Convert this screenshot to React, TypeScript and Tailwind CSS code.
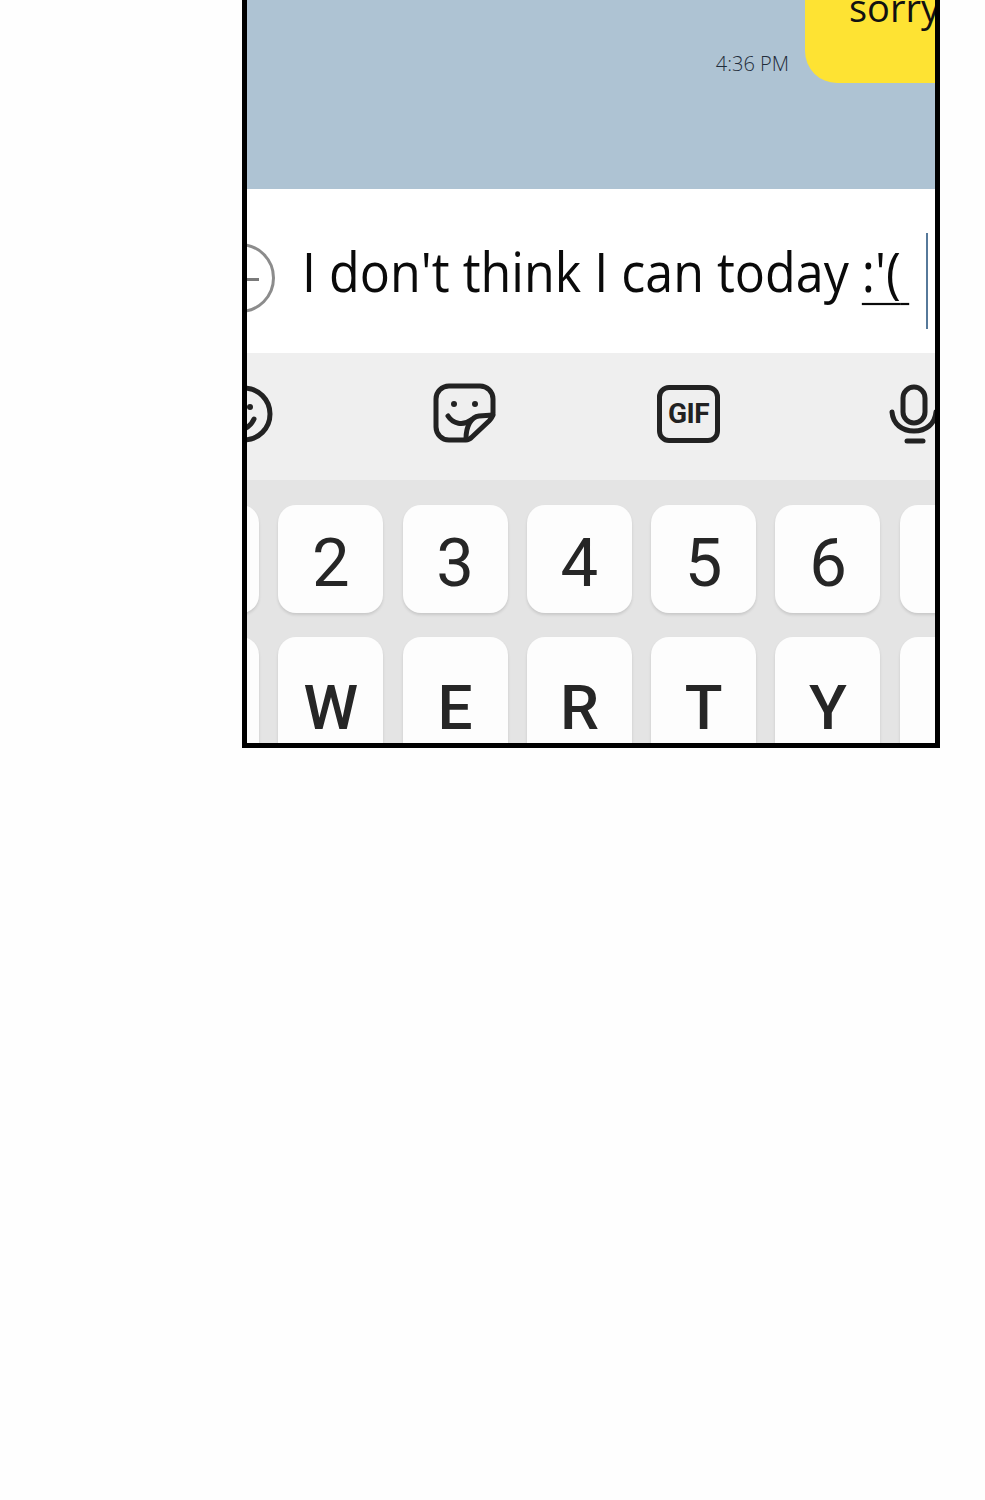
import React from 'react';

const digits = ['1', '2', '3', '4', '5', '6', '7'];
const letters = ['Q', 'W', 'E', 'R', 'T', 'Y', 'U'];

const Key: React.FC<{ label: string; tall?: boolean }> = ({ label, tall }) => (
  <div
    className={`w-[105px] shrink-0 bg-[#fdfdfd] rounded-[18px] shadow-[0_2px_3px_rgba(0,0,0,0.12)] flex items-center justify-center text-[#262626] font-['Roboto',sans-serif] leading-none ${
      tall ? 'h-[142px] font-medium text-[62px]' : 'h-[108px] font-normal text-[67px] pt-[8px]'
    }`}
  >
    {label}
  </div>
);

const EmojiIcon = () => (
  <svg width="64" height="64" viewBox="0 0 64 64" fill="none" stroke="#222" strokeWidth="5" strokeLinecap="round" className="shrink-0">
    <circle cx="32" cy="32" r="26" />
    <circle cx="22" cy="25" r="3" fill="#222" stroke="none" />
    <circle cx="38" cy="25" r="3" fill="#222" stroke="none" />
    <path d="M18 37 C 22 50 36 50 42 37" />
  </svg>
);

const StickerIcon = () => (
  <svg width="64" height="64" viewBox="0 0 64 64" fill="none" stroke="#222" strokeWidth="5" strokeLinecap="round" strokeLinejoin="round" className="shrink-0">
    <path d="M33 58 H16 A13 13 0 0 1 3 45 V17 A13 13 0 0 1 16 4 H47 A13 13 0 0 1 60 17 V31 C 60 35 58 37 56 39 L39 55 C 37 57 35 58 33 58 Z" />
    <path d="M60 33 L46 34 C 38 35 33 44 33 57" />
    <path d="M15 34 C 20 42 30 44 38 38" />
    <circle cx="21" cy="22" r="3" fill="#222" stroke="none" />
    <circle cx="42" cy="22" r="3" fill="#222" stroke="none" />
  </svg>
);

const MicIcon = () => (
  <svg width="64" height="64" viewBox="0 0 64 64" fill="none" stroke="#222" strokeWidth="5" strokeLinecap="round" className="shrink-0">
    <rect x="21" y="5" width="22" height="36" rx="11" />
    <path d="M10 30 C 11 42 20 49 32 49 C 44 49 53 42 54 30" />
    <path d="M25 59 H41" />
  </svg>
);

const App: React.FC = () => {
  return (
    <div className="w-[985px] h-[1500px] bg-[#fefefe] overflow-hidden">
      <div className="ml-[242px] w-[698px] h-[748px] border-x-[5px] border-b-[5px] border-black flex flex-col overflow-hidden font-['Open_Sans',sans-serif]">
        {/* Chat */}
        <div className="h-[189px] shrink-0 bg-[#aec3d3] flex justify-end items-start overflow-hidden">
          <span className="mt-[52px] mr-[16px] text-[20px] leading-[24px] font-light text-[#1f2c3a]">4:36 PM</span>
          <div className="w-[130px] h-[83px] shrink-0 bg-[#fee333] rounded-bl-[32px] overflow-hidden">
            <div className="-mt-[17px] ml-[44px] text-[38px] leading-[48px] text-[#111] whitespace-nowrap">sorry</div>
          </div>
        </div>

        {/* Input */}
        <div className="h-[164px] shrink-0 bg-white flex items-center overflow-hidden">
          <div className="relative -ml-[42px] mr-[27px] w-[70px] h-[70px] shrink-0 rounded-full border-[3px] border-[#8c8c8c] mt-[14px]">
            <div className="absolute left-[15px] top-[32px] w-[36px] h-[3px] bg-[#7a7a7a]"></div>
          </div>
          <div className="text-[50.2px] leading-[64px] text-[#0a0a0a] whitespace-nowrap scale-y-110">
            I don't think I can today <span className="underline decoration-[2px] underline-offset-[10px]">:'({'\u2009'}</span>
          </div>
          <div className="ml-auto mr-[7px] w-[2px] h-[96px] bg-[#56799a] mt-[20px]"></div>
        </div>

        {/* Toolbar */}
        <div className="h-[127px] shrink-0 bg-[#efefef] flex items-center -ml-[35px] pb-[6px]">
          <EmojiIcon />
          <div className="ml-[157px]">
            <StickerIcon />
          </div>
          <div className="ml-[160px] w-[63px] h-[58px] shrink-0 rounded-[12px] border-[5px] border-[#222] flex items-center justify-center font-['Roboto',sans-serif] font-bold text-[28px] text-[#222] tracking-[-0.5px]">
            GIF
          </div>
          <div className="ml-[162px]">
            <MicIcon />
          </div>
        </div>

        {/* Keyboard */}
        <div className="flex-1 bg-[#e4e4e4] overflow-hidden pt-[25px] flex flex-col gap-[24px]">
          <div className="flex gap-[19.3px] -ml-[93px]">
            {digits.map((d) => (
              <Key key={d} label={d} />
            ))}
          </div>
          <div className="flex gap-[19.3px] -ml-[93px]">
            {letters.map((l) => (
              <Key key={l} label={l} tall />
            ))}
          </div>
        </div>
      </div>
    </div>
  );
};

export default App;
